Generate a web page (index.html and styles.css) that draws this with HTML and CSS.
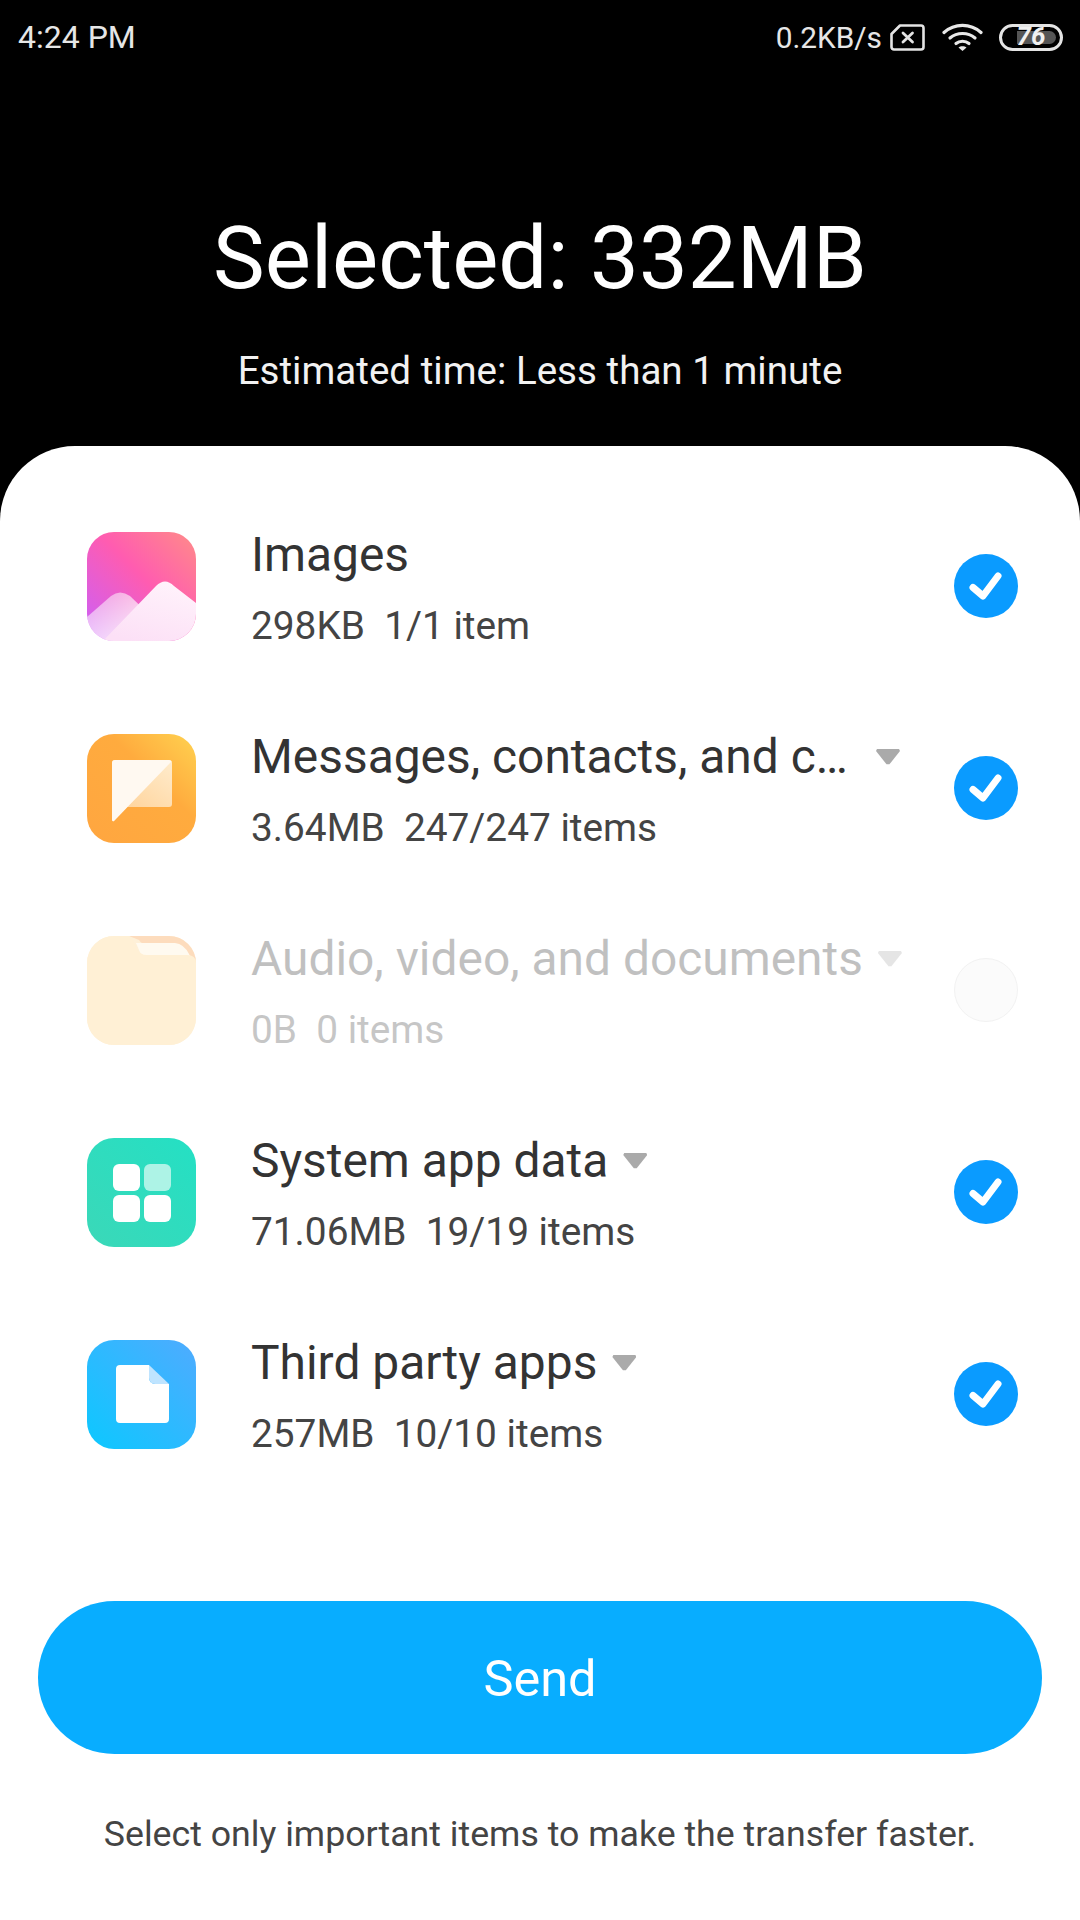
FILE: index.html
```html
<!DOCTYPE html>
<html lang="en">
<head>
<meta charset="utf-8">
<title>Send</title>
<link rel="stylesheet" href="styles.css">
</head>
<body>
<div class="page">
  <header class="top">
    <div class="status">
      <span class="time">4:24 PM</span>
      <div class="status-right">
        <span class="speed">0.2KB/s</span>
        <svg class="sim" viewBox="0 0 35 27"><path d="M10 1.5H31a2.5 2.5 0 0 1 2.5 2.500V23a2.500 2.500 0 0 1-2.500 2.500H4A2.500 2.500 0 0 1 1.500 23V10Z" fill="none" stroke="#e4e4e4" stroke-width="2.600" stroke-linejoin="round"/><path d="M13 9l9.500 9M22.500 9L13 18" stroke="#e4e4e4" stroke-width="2.800" stroke-linecap="round"/></svg>
        <svg class="wifi" viewBox="0 0 41 28"><g fill="none" stroke="#e8e8e8" stroke-width="3.200" stroke-linecap="round"><path d="M2 9.500C12.500 0 28.500 0 39 9.500"/><path d="M8 15C15 9 26 9 33 15"/><path d="M14 20.500C17.500 17.500 23.500 17.500 27 20.500"/></g><path d="M16.500 24.500c2-1.600 6-1.600 8 0l-4 3.500Z" fill="#e8e8e8"/></svg>
        <div class="battery"><span class="battery-fill"></span><span class="battery-num">76</span></div>
      </div>
    </div>
    <h1 class="headline">Selected: 332MB</h1>
    <p class="estimate">Estimated time: Less than 1 minute</p>
  </header>

  <main class="sheet">
    <ul class="rows">
      <li class="row">
        <svg class="icon" viewBox="0 0 109 109">
          <defs>
            <linearGradient id="pinkBg" x1="0" y1="1" x2="1" y2="0"><stop offset="0" stop-color="#c95ffb"/><stop offset=".55" stop-color="#ff5cb0"/><stop offset="1" stop-color="#ff8c88"/></linearGradient>
            <linearGradient id="peakA" x1="0" y1="0" x2="1" y2="1"><stop offset="0" stop-color="#fff" stop-opacity=".4"/><stop offset="1" stop-color="#fff" stop-opacity=".95"/></linearGradient>
            <linearGradient id="peakB" x1="0.700" y1="0" x2="0.300" y2="1"><stop offset="0" stop-color="#fff2fb"/><stop offset="1" stop-color="#fce0f6"/></linearGradient>
            <clipPath id="clipA"><rect width="109" height="109" rx="27"/></clipPath>
          </defs>
          <g clip-path="url(#clipA)">
            <rect width="109" height="109" fill="url(#pinkBg)"/>
            <path d="M0 85L24 64Q33 57 43 64L70 90V109H0Z" fill="url(#peakA)"/>
            <path d="M16 109L69 54Q78 45 87 54L109 71V109Z" fill="url(#peakB)"/>
          </g>
        </svg>
        <div class="text">
          <div class="title-line"><span class="title">Images</span></div>
          <div class="sub">298KB&nbsp;&nbsp;1/1 item</div>
        </div>
        <span class="check"><svg viewBox="0 0 64 64"><path d="M19 33.500L29 42L44 22" fill="none" stroke="#fff" stroke-width="7" stroke-linecap="round" stroke-linejoin="round"/></svg></span>
      </li>

      <li class="row">
        <svg class="icon" viewBox="0 0 109 109">
          <defs>
            <linearGradient id="orangeBg" x1="0" y1="1" x2="1" y2="0"><stop offset="0" stop-color="#ffa640"/><stop offset=".6" stop-color="#ffab3e"/><stop offset="1" stop-color="#ffd250"/></linearGradient>
            <linearGradient id="bubbleB" x1="1" y1="0" x2="0.300" y2="1"><stop offset="0" stop-color="#ffeccd"/><stop offset="1" stop-color="#ffd196"/></linearGradient>
          </defs>
          <rect width="109" height="109" rx="27" fill="url(#orangeBg)"/>
          <path d="M28 26H82a3 3 0 0 1 3 3V70a3 3 0 0 1-3 3H40L27 87a1.500 1.500 0 0 1-2-1V29a3 3 0 0 1 3-3Z" fill="url(#bubbleB)"/>
          <path d="M28 26H82a3 3 0 0 1 2.500 1.500L27 87a1.500 1.500 0 0 1-2-1V29a3 3 0 0 1 3-3Z" fill="#fff9f1"/>
        </svg>
        <div class="text">
          <div class="title-line"><span class="title title-cut">Messages, contacts, and c…</span><span class="caret"></span></div>
          <div class="sub">3.64MB&nbsp;&nbsp;247/247 items</div>
        </div>
        <span class="check"><svg viewBox="0 0 64 64"><path d="M19 33.500L29 42L44 22" fill="none" stroke="#fff" stroke-width="7" stroke-linecap="round" stroke-linejoin="round"/></svg></span>
      </li>

      <li class="row row-off">
        <svg class="icon" viewBox="0 0 109 109">
          <rect width="109" height="109" rx="27" fill="#fef0d8"/>
          <path d="M42 0H82a27 27 0 0 1 27 27V30L100 18Q97 9 90 9H62Q55 9 52 4Z" fill="#fddcbd"/>
          <path d="M49 7H88Q97 8 102 18L103 20H60Q54 20 52 14Z" fill="#fffaf0"/>
          <path d="M0 27A27 27 0 0 1 27 0H40Q44 0 46 4L50 13Q53 19 60 19H100Q109 19 109 27V82A27 27 0 0 1 82 109H27A27 27 0 0 1 0 82Z" fill="#fff0d5"/>
        </svg>
        <div class="text">
          <div class="title-line"><span class="title">Audio, video, and documents</span><span class="caret"></span></div>
          <div class="sub">0B&nbsp;&nbsp;0 items</div>
        </div>
        <span class="check check-off"></span>
      </li>

      <li class="row">
        <svg class="icon" viewBox="0 0 109 109">
          <defs><linearGradient id="greenBg" x1="0" y1="1" x2="1" y2="0"><stop offset="0" stop-color="#3bd8b8"/><stop offset="1" stop-color="#24e0c4"/></linearGradient></defs>
          <rect width="109" height="109" rx="27" fill="url(#greenBg)"/>
          <rect x="26" y="26" width="27" height="27" rx="6" fill="#fff"/>
          <rect x="57" y="26" width="27" height="27" rx="6" fill="#adf3e6"/>
          <rect x="26" y="57" width="27" height="27" rx="6" fill="#fff"/>
          <rect x="57" y="57" width="27" height="27" rx="6" fill="#fff"/>
        </svg>
        <div class="text">
          <div class="title-line"><span class="title">System app data</span><span class="caret"></span></div>
          <div class="sub">71.06MB&nbsp;&nbsp;19/19 items</div>
        </div>
        <span class="check"><svg viewBox="0 0 64 64"><path d="M19 33.500L29 42L44 22" fill="none" stroke="#fff" stroke-width="7" stroke-linecap="round" stroke-linejoin="round"/></svg></span>
      </li>

      <li class="row">
        <svg class="icon" viewBox="0 0 109 109">
          <defs><linearGradient id="blueBg" x1="0" y1="1" x2="1" y2="0"><stop offset="0" stop-color="#0cc8ff"/><stop offset="1" stop-color="#4fabff"/></linearGradient></defs>
          <rect width="109" height="109" rx="27" fill="url(#blueBg)"/>
          <path d="M33 25H62V38a6 6 0 0 0 6 6H82V79a4 4 0 0 1-4 4H33a4 4 0 0 1-4-4V29a4 4 0 0 1 4-4Z" fill="#fff"/>
          <path d="M62 25L82 44H68a6 6 0 0 1-6-6Z" fill="#bfe4ff"/>
        </svg>
        <div class="text">
          <div class="title-line"><span class="title">Third party apps</span><span class="caret"></span></div>
          <div class="sub">257MB&nbsp;&nbsp;10/10 items</div>
        </div>
        <span class="check"><svg viewBox="0 0 64 64"><path d="M19 33.500L29 42L44 22" fill="none" stroke="#fff" stroke-width="7" stroke-linecap="round" stroke-linejoin="round"/></svg></span>
      </li>
    </ul>

    <button class="send" type="button">Send</button>
    <p class="hint">Select only important items to make the transfer faster.</p>
  </main>
</div>
</body>
</html>
```
FILE: styles.css
```css
* { box-sizing: border-box; }
html, body { margin: 0; padding: 0; }
body { width: 1080px; height: 1920px; overflow: hidden; background: #000; font-family: Roboto, "Noto Sans", sans-serif; }
.page { width: 1080px; height: 1920px; display: flex; flex-direction: column; }

.top { height: 446px; color: #fff; display: flex; flex-direction: column; align-items: center; }
.status { width: 100%; height: 74px; padding: 0 17px 0 18px; display: flex; align-items: center; justify-content: space-between; color: #e6e6e6; }
.time { font-size: 32px; }
.status-right { display: flex; align-items: center; }
.speed { font-size: 29.800px; }
.sim { width: 35px; height: 27px; margin-left: 8px; }
.wifi { width: 41px; height: 28px; margin-left: 17px; }
.battery { position: relative; width: 64px; height: 27px; margin-left: 16px; border: 3px solid #e4e4e4; border-radius: 14px; }
.battery-fill { position: absolute; left: 15px; top: 4px; bottom: 4px; width: 39px; background: #555; border-radius: 0 8px 8px 0; }
.battery-num { position: absolute; left: 0; right: 0; top: -4px; text-align: center; font-size: 26px; line-height: 27px; font-weight: 700; font-style: italic; color: #f0f0f0; }

.headline { margin: 134px 0 0; height: 100px; line-height: 100px; font-size: 87px; font-weight: 400; }
.estimate { margin: 41px 0 0; font-size: 38.600px; line-height: 44px; color: #f2f2f2; }

.sheet { flex: 1; background: #fff; border-radius: 75px 75px 0 0; padding-top: 39px; display: flex; flex-direction: column; align-items: center; }
.rows { list-style: none; margin: 0; padding: 0; width: 100%; }
.row { height: 202px; padding: 0 62px 0 87px; display: flex; align-items: center; }
.row-off .text { opacity: .3; }
.icon { width: 109px; height: 109px; flex: none; }
.text { flex: 1; min-width: 0; margin-left: 55px; padding-top: 3px; }
.title-line { display: flex; align-items: center; height: 56px; }
.title { font-size: 47.900px; line-height: 56px; color: #333; white-space: nowrap; }
.title-cut { width: 610px; }
.caret { flex: none; width: 24px; height: 16px; margin: 0 0 0 15px; background: #aaa; clip-path: polygon(4% 0, 96% 0, 100% 12%, 56% 96%, 44% 96%, 0 12%); }
.sub { margin-top: 21px; font-size: 38.800px; line-height: 44px; color: #444; white-space: nowrap; }

.check { flex: none; width: 64px; height: 64px; border-radius: 50%; background: #0a9bff; }
.check svg { display: block; width: 64px; height: 64px; }
.check-off { background: #fbfbfb; border: 1px solid #f2f2f2; }

.send { margin-top: 106px; width: 1004px; height: 153px; padding: 2px 0 0; border: 0; border-radius: 77px; background: #08adff; color: #fff; font: 400 50.500px Roboto, sans-serif; }
.hint { margin: 58px 0 0; font-size: 35.700px; line-height: 44px; color: #444; }
```
